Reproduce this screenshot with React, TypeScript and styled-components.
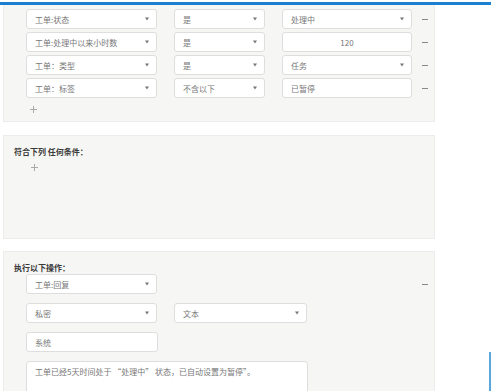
import React from 'react';
import styled, {createGlobalStyle} from 'styled-components';

const GlobalStyle = createGlobalStyle`
  html, body {
    margin: 0;
    padding: 0;
    background: #ffffff;
    font-family: "Noto Sans CJK SC", "Noto Sans", sans-serif;
  }
`;

const Page = styled.div`
  position: relative;
  width: 494px;
  height: 391px;
  overflow: hidden;
  padding-top: 2px;
  box-sizing: border-box;
`;

const TopBar = styled.div`
  width: 491px;
  height: 3px;
  background: #1a80cf;
`;

const Panel = styled.div<{ $height?: number; $top?: number }>`
  margin: ${p => p.$top ?? 0}px 0 0 3px;
  width: 432px;
  height: ${p => (p.$height ? `${p.$height}px` : 'auto')};
  box-sizing: border-box;
  background: #f6f6f4;
  border: 1px solid #ececea;
  border-top: ${p => (p.$top ? '1px solid #ececea' : 'none')};
  padding: ${p => (p.$top ? '10px 6px 0 10px' : '4px 0 0 22px')};
  display: flex;
  flex-direction: column;
`;

const Title = styled.div`
  font-size: 8px;
  font-weight: 700;
  color: #3a3a3a;
  line-height: 12px;
`;

const Rows = styled.div<{ $indent?: number; $gap?: number }>`
  display: flex;
  flex-direction: column;
  gap: ${p => p.$gap ?? 3}px;
  padding-left: ${p => p.$indent ?? 0}px;
`;

const Row = styled.div`
  display: flex;
  align-items: center;
  gap: 17px;
`;

const Field = styled.div<{ $w: number; $center?: boolean }>`
  position: relative;
  flex-shrink: 0;
  width: ${p => p.$w}px;
  height: 20px;
  box-sizing: border-box;
  background: #ffffff;
  border: 1px solid #dedede;
  border-radius: 3px;
  display: flex;
  align-items: center;
  justify-content: ${p => (p.$center ? 'center' : 'flex-start')};
  padding: 0 8px;
  font-size: 8px;
  color: #777;
  white-space: nowrap;
`;

const Caret = styled.span`
  position: absolute;
  right: 7px;
  top: 50%;
  transform: translateY(-50%);
  width: 0;
  height: 0;
  border-left: 2px solid transparent;
  border-right: 2px solid transparent;
  border-top: 3px solid #777;
`;

const Minus = styled.span<{ $ml?: number }>`
  flex-shrink: 0;
  width: 6px;
  height: 1px;
  background: #888;
  margin-left: ${p => p.$ml ?? 0}px;
`;

const Plus = styled.span<{ $ml: number; $mt: number }>`
  position: relative;
  width: 7px;
  height: 7px;
  margin: ${p => p.$mt}px 0 0 ${p => p.$ml}px;
  &::before, &::after {
    content: '';
    position: absolute;
    background: #aaa;
  }
  &::before { left: 0; top: 3px; width: 7px; height: 1px; }
  &::after { left: 3px; top: 0; width: 1px; height: 7px; }
`;

const ActionRow = styled.div`
  display: flex;
  align-items: center;
  justify-content: space-between;
`;

const TextArea = styled.div`
  width: 282px;
  height: 50px;
  box-sizing: border-box;
  background: #ffffff;
  border: 1px solid #dedede;
  border-radius: 3px;
  padding: 4px 8px;
  font-size: 8px;
  line-height: 12px;
  color: #777;
`;

const SideLine = styled.div`
  position: absolute;
  left: 489px;
  top: 352px;
  width: 2px;
  height: 40px;
  background: #5aa6de;
`;

type Cond = { a: string; b: string; c: string; cSelect: boolean; center?: boolean };

const conditions: Cond[] = [
    {a: '工单:状态', b: '是', c: '处理中', cSelect: true},
    {a: '工单:处理中以来小时数', b: '是', c: '120', cSelect: false, center: true},
    {a: '工单：类型', b: '是', c: '任务', cSelect: true},
    {a: '工单：标签', b: '不含以下', c: '已暂停', cSelect: false},
];

const App = () => (
    <>
        <GlobalStyle />
        <Page>
            <TopBar />
            <Panel $height={117}>
                <Rows>
                    {conditions.map(c => (
                        <Row key={c.a}>
                            <Field $w={131}>{c.a}<Caret /></Field>
                            <Field $w={91}>{c.b}<Caret /></Field>
                            <Field $w={130} $center={c.center}>
                                {c.c}
                                {c.cSelect && <Caret />}
                            </Field>
                            <Minus $ml={-7} />
                        </Row>
                    ))}
                </Rows>
                <Plus $ml={4} $mt={8} />
            </Panel>
            <Panel $top={13} $height={104}>
                <Title>符合下列 任何条件：</Title>
                <Plus $ml={17} $mt={6} />
            </Panel>
            <Panel $top={12} $height={160}>
                <Title>执行以下操作：</Title>
                <Rows $indent={12} $gap={9}>
                    <ActionRow>
                        <Field $w={131}>工单:回复<Caret /></Field>
                        <Minus />
                    </ActionRow>
                    <Row>
                        <Field $w={131}>私密<Caret /></Field>
                        <Field $w={133}>文本<Caret /></Field>
                    </Row>
                    <Field $w={132}>系统</Field>
                    <TextArea>工单已经5天时间处于 “处理中” 状态，已自动设置为暂停”。</TextArea>
                </Rows>
            </Panel>
            <SideLine />
        </Page>
    </>
);

export default App;
